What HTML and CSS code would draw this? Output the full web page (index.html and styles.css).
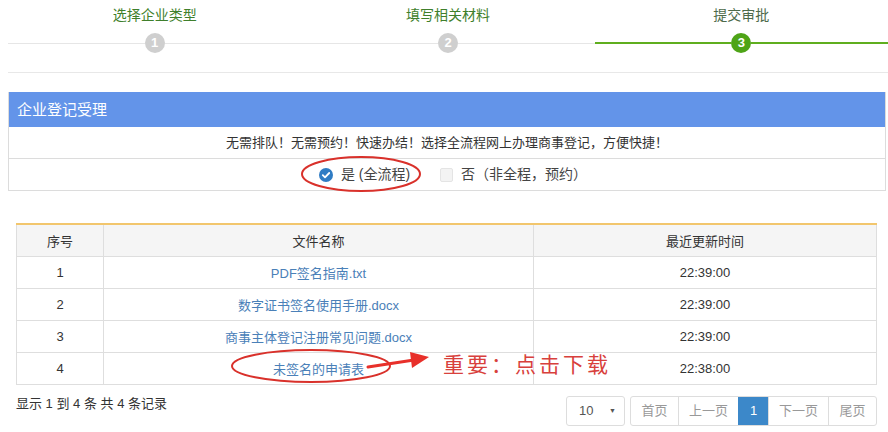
FILE: index.html
```html
<!DOCTYPE html>
<html lang="zh-CN">
<head>
    <meta charset="UTF-8">
    <meta name="viewport" content="width=device-width, initial-scale=1.0">
    <title>企业登记受理</title>
    <link rel="stylesheet" href="styles.css">
</head>
<body>
    <div class="page">
        <div class="steps">
            <div class="step done">
                <div class="step-label">选择企业类型</div>
                <div class="step-track"><span class="line"></span><span class="dot">1</span><span class="line"></span></div>
            </div>
            <div class="step done">
                <div class="step-label">填写相关材料</div>
                <div class="step-track"><span class="line"></span><span class="dot">2</span><span class="line"></span></div>
            </div>
            <div class="step active">
                <div class="step-label">提交审批</div>
                <div class="step-track"><span class="line"></span><span class="dot">3</span><span class="line"></span></div>
            </div>
        </div>
        <div class="divider"></div>

        <div class="panel">
            <div class="panel-head">企业登记受理</div>
            <div class="panel-row">无需排队！无需预约！快速办结！选择全流程网上办理商事登记，方便快捷！</div>
            <div class="panel-row options">
                <label class="opt">
                    <span class="radio-on">
                        <svg width="14" height="14" viewBox="0 0 14 14"><circle cx="7" cy="7" r="7" fill="#2f7cc4"/><path d="M3.8 7.2 L6 9.3 L10.2 5" stroke="#fff" stroke-width="1.8" fill="none" stroke-linecap="round" stroke-linejoin="round"/></svg>
                    </span>
                    是 (全流程)
                </label>
                <label class="opt">
                    <span class="check-off"></span>
                    否（非全程，预约）
                </label>
            </div>
        </div>

        <table class="files">
            <thead>
                <tr><th class="c-no">序号</th><th class="c-name">文件名称</th><th>最近更新时间</th></tr>
            </thead>
            <tbody>
                <tr><td>1</td><td><a href="#">PDF签名指南.txt</a></td><td>22:39:00</td></tr>
                <tr><td>2</td><td><a href="#">数字证书签名使用手册.docx</a></td><td>22:39:00</td></tr>
                <tr><td>3</td><td><a href="#">商事主体登记注册常见问题.docx</a></td><td>22:39:00</td></tr>
                <tr><td>4</td><td><a href="#">未签名的申请表</a></td><td>22:38:00</td></tr>
            </tbody>
        </table>

        <div class="table-foot">
            <div class="info">显示 1 到 4 条 共 4 条记录</div>
            <div class="pager-wrap">
                <div class="page-size">10 <span class="caret">▼</span></div>
                <ul class="pager">
                    <li class="short">首页</li>
                    <li>上一页</li>
                    <li class="current">1</li>
                    <li>下一页</li>
                    <li class="short">尾页</li>
                </ul>
            </div>
        </div>

        <!-- hand drawn marks on top of the screenshot -->
        <svg class="marks" width="888" height="432" viewBox="0 0 888 432">
            <ellipse cx="361" cy="174" rx="59" ry="17" fill="none" stroke="#d9312b" stroke-width="2"/>
            <ellipse cx="311" cy="366" rx="79" ry="16" fill="none" stroke="#d9312b" stroke-width="2"/>
            <path d="M368 367 L414 360" stroke="#e8302a" stroke-width="3" fill="none" stroke-linecap="round"/>
            <path d="M410 352 L429 357 L412 368 Z" fill="#e8302a"/>
        </svg>
        <div class="note">重要：点击下载</div>
    </div>
</body>
</html>
```

FILE: styles.css
```css
body {
    margin: 0;
    font-family: "Liberation Sans", "Noto Sans CJK SC", sans-serif;
    font-size: 13px;
    color: #333;
    background: #fff;
}
.page {
    position: relative;
    width: 888px;
    height: 432px;
    overflow: hidden;
}

/* steps */
.steps {
    display: grid;
    grid-template-columns: repeat(3, 1fr);
    margin-left: 8px;
    padding-top: 6px;
}
.step-label {
    text-align: center;
    font-size: 14px;
    line-height: 18px;
    color: #3f7f2c;
}
.step.active .step-label {
    color: #4d6a4a;
}
.step-track {
    display: flex;
    align-items: center;
    height: 20px;
    margin-top: 9px;
}
.step-track .line {
    flex: 1;
    height: 1px;
    background: #e6e6e6;
}
.step.active .step-track .line {
    height: 2px;
    background: #5fae1e;
}
.dot {
    width: 20px;
    height: 20px;
    border-radius: 50%;
    background: #cfcfcf;
    color: #fff;
    font-size: 13px;
    font-weight: bold;
    line-height: 20px;
    text-align: center;
}
.step.active .dot {
    background: #4ea417;
}
.divider {
    margin: 19px 0 0 8px;
    border-top: 1px solid #e8e8e8;
}

/* panel */
.panel {
    margin: 19px 2px 0 8px;
    border: 1px solid #dcdcdc;
    border-top: none;
}
.panel-head {
    height: 35px;
    line-height: 35px;
    padding-left: 8px;
    background: #6394e9;
    color: #fff;
    font-size: 15px;
}
.panel-row {
    height: 31px;
    line-height: 31px;
    text-align: center;
    border-bottom: 1px solid #dcdcdc;
}
.panel-row:last-child {
    border-bottom: none;
}
.options {
    display: flex;
    justify-content: center;
    gap: 30px;
    padding-left: 12px;
}
.opt {
    display: flex;
    align-items: center;
    gap: 8px;
    font-size: 14px;
    color: #444;
}
.radio-on {
    display: flex;
}
.check-off {
    width: 11px;
    height: 12px;
    border: 1px solid #e4e4e4;
    border-radius: 2px;
    background: #f3f3f3;
}

/* table */
.files {
    margin: 32px 0 0 16px;
    width: 861px;
    border-collapse: collapse;
    border-top: 2px solid #f2c66d;
}
.files th,
.files td {
    height: 31px;
    padding: 0;
    border: 1px solid #dedede;
    text-align: center;
    font-weight: normal;
    font-size: 13px;
    color: #333;
}
.files th {
    background: #f5f5f5;
    border-top: none;
}
.files .c-no {
    width: 86px;
}
.files .c-name {
    width: 429px;
}
.files a {
    color: #4a80b8;
    text-decoration: none;
}

/* footer */
.table-foot {
    display: flex;
    justify-content: space-between;
    align-items: flex-start;
    margin: 11px 11px 0 16px;
}
.info {
    font-size: 13px;
    line-height: 16px;
}
.pager-wrap {
    display: flex;
    gap: 5px;
}
.page-size {
    box-sizing: border-box;
    width: 59px;
    height: 30px;
    line-height: 28px;
    padding-left: 12px;
    border: 1px solid #ddd;
    border-radius: 3px;
    font-size: 13px;
    color: #555;
}
.caret {
    font-size: 7px;
    margin-left: 12px;
    vertical-align: 2px;
}
.pager {
    display: flex;
    margin: 0;
    padding: 0;
    list-style: none;
    border: 1px solid #ddd;
    border-radius: 3px;
    overflow: hidden;
}
.pager li {
    box-sizing: border-box;
    width: 60px;
    height: 28px;
    line-height: 28px;
    text-align: center;
    border-left: 1px solid #ddd;
    color: #999;
    font-size: 13px;
}
.pager li.short {
    width: 48px;
}
.pager li:first-child {
    border-left: none;
    width: 47px;
}
.pager li.current {
    width: 30px;
    background: #3c88c9;
    border-color: #3c88c9;
    color: #fff;
}

/* annotations */
.marks {
    position: absolute;
    left: 0;
    top: 0;
    pointer-events: none;
}
.note {
    position: absolute;
    left: 443px;
    top: 352px;
    font-size: 21px;
    line-height: 26px;
    color: #d8403c;
    letter-spacing: 3px;
}
```
